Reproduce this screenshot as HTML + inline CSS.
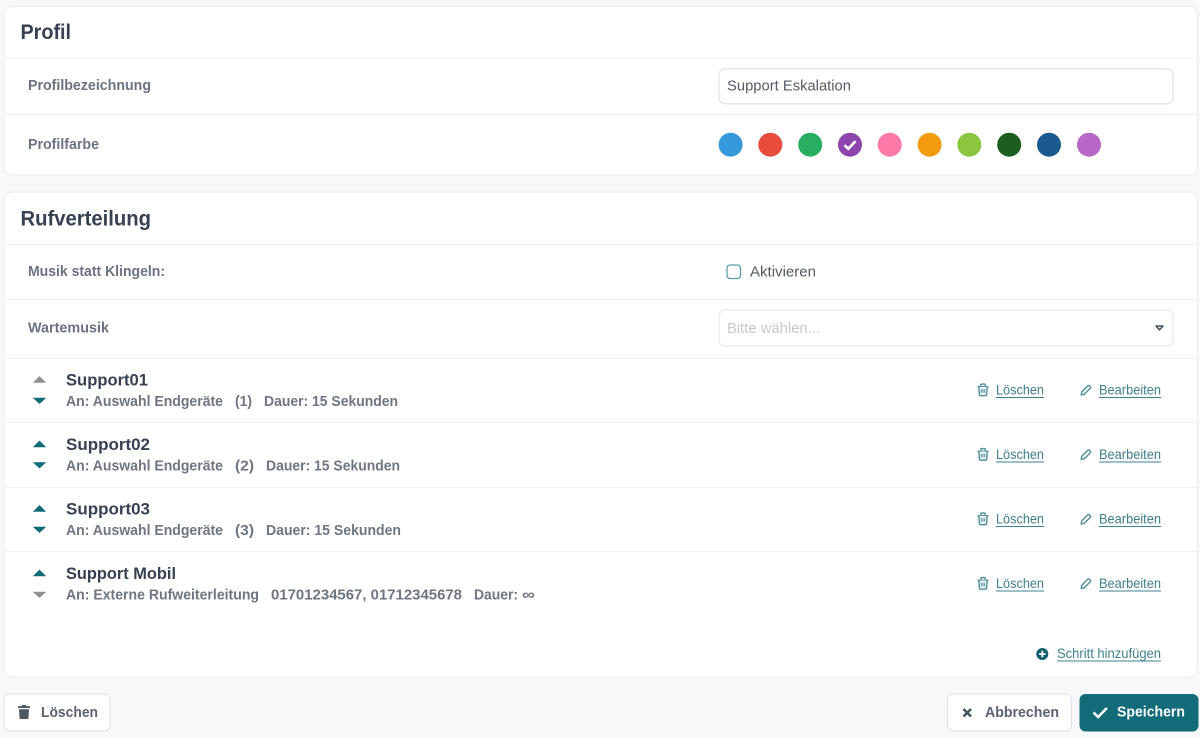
<!DOCTYPE html>
<html lang="de">
<head>
<meta charset="utf-8">
<title>Profil</title>
<style>
html,body{margin:0;padding:0;width:1200px;height:737px;overflow:hidden;background:#f7f8fa}
svg{display:block;filter:blur(.3px)}
text{font-family:"Liberation Sans",sans-serif}
.t{font-weight:700;font-size:21px;fill:#374151}
.l{font-weight:700;font-size:15px;fill:#6b7280}
.n{font-weight:700;font-size:16.5px;fill:#374151}
.s{font-weight:700;font-size:15px;fill:#6f7682}
.a{font-size:14px;fill:#3f7f8b}
.i{font-size:15px;fill:#555b66}
.b{font-weight:700;font-size:15px;fill:#5b6370}
</style>
</head>
<body>
<svg width="1200" height="737" viewBox="0 0 1200 737" xmlns="http://www.w3.org/2000/svg">
<defs>
<g id="tr" fill="#eaf2f3" stroke="#4f8e9a" stroke-width="1.4">
<path d="M-5 -3.2h10M-2.2 -3.4v-1.6q0-.9.9-.9h2.6q.9 0 .9.9v1.6" stroke-linecap="round" fill="none"/>
<path d="M-4.2 -3l.6 7.6q.1 1.1 1.1 1.1h5q1 0 1.1-1.1l.6-7.6"/>
<path d="M-1.7 -.8v3.6M0 -.8v3.6M1.7 -.8v3.6" stroke-width=".9" fill="none"/>
</g>
<g id="pe" fill="#fff" stroke="#4f8e9a" stroke-width="1.4" stroke-linejoin="round">
<path d="M-4.8 5l.6-3.2 6-6q.8-.8 1.6 0l.9.9q.8.8 0 1.6l-6 6z"/>
</g>
</defs>

<rect width="1200" height="737" fill="#f7f8fa"/>

<!-- Card 1 -->
<rect x="4" y="6.5" width="1193.5" height="168.5" rx="8" fill="#fff" stroke="#eaecef"/>
<rect x="5" y="57.5" width="1192" height="1" fill="#eff0f2"/>
<rect x="5" y="114" width="1192" height="1" fill="#eff0f2"/>
<text class="t" x="20.5" y="39" textLength="50.5" lengthAdjust="spacingAndGlyphs">Profil</text>
<text class="l" x="28" y="90" textLength="123" lengthAdjust="spacingAndGlyphs">Profilbezeichnung</text>
<rect x="719" y="68.8" width="454" height="35" rx="6" fill="#fff" stroke="#e2e4e9" stroke-width="1.3"/>
<text class="i" x="727" y="90.5" textLength="124" lengthAdjust="spacingAndGlyphs">Support Eskalation</text>
<text class="l" x="28" y="149" textLength="71" lengthAdjust="spacingAndGlyphs">Profilfarbe</text>
<circle cx="730.6" cy="144.7" r="12" fill="#3498db"/>
<circle cx="770.3" cy="144.7" r="12" fill="#e74c3c"/>
<circle cx="810.2" cy="144.7" r="12" fill="#27ae60"/>
<circle cx="850" cy="144.7" r="12" fill="#8e44ad"/>
<path d="M844.5 145.2l3.8 3.6 7.2-7.6" fill="none" stroke="#fff" stroke-width="2.6"/>
<circle cx="889.7" cy="144.7" r="12" fill="#fd79a8"/>
<circle cx="929.6" cy="144.7" r="12" fill="#f39c12"/>
<circle cx="969.3" cy="144.7" r="12" fill="#8cc63f"/>
<circle cx="1009.2" cy="144.7" r="12" fill="#1b5e20"/>
<circle cx="1049" cy="144.7" r="12" fill="#1a5a8f"/>
<circle cx="1089" cy="144.7" r="12" fill="#b768c7"/>

<!-- Card 2 -->
<rect x="4" y="192" width="1193.5" height="485" rx="8" fill="#fff" stroke="#eaecef"/>
<rect x="5" y="244" width="1192" height="1" fill="#eff0f2"/>
<rect x="5" y="299" width="1192" height="1" fill="#eff0f2"/>
<rect x="5" y="358" width="1192" height="1" fill="#eff0f2"/>
<rect x="5" y="422" width="1192" height="1" fill="#eff0f2"/>
<rect x="5" y="487" width="1192" height="1" fill="#eff0f2"/>
<rect x="5" y="551" width="1192" height="1" fill="#eff0f2"/>
<text class="t" x="20.5" y="225.5" textLength="130.5" lengthAdjust="spacingAndGlyphs">Rufverteilung</text>
<text class="l" x="28" y="276" textLength="137" lengthAdjust="spacingAndGlyphs">Musik statt Klingeln:</text>
<rect x="727" y="265" width="13.5" height="13.5" rx="3" fill="#fff" stroke="#5a9eaa" stroke-width="1.3"/>
<text class="i" x="750" y="276.5" textLength="66" lengthAdjust="spacingAndGlyphs">Aktivieren</text>
<text class="l" x="28" y="332.5" textLength="81" lengthAdjust="spacingAndGlyphs">Wartemusik</text>
<rect x="719" y="310" width="454" height="36" rx="6" fill="#fff" stroke="#e8eaed" stroke-width="1.3"/>
<text x="727" y="333" font-size="15" fill="#c4c8cf" textLength="93" lengthAdjust="spacingAndGlyphs">Bitte wählen...</text>
<path d="M1156 326h7l-3.5 3.8z" fill="#fff" stroke="#4b5563" stroke-width="1.6" stroke-linejoin="round"/>

<!-- Row 1 -->
<path d="M33.5 382.5l6-6 6 6z" fill="#8f8f8f" stroke="#8f8f8f" stroke-width=".6" stroke-linejoin="round"/>
<path d="M33.5 398l6 5.5 6-5.5z" fill="#126b78" stroke="#126b78" stroke-width=".6" stroke-linejoin="round"/>
<text class="n" x="66" y="385.5" textLength="82" lengthAdjust="spacingAndGlyphs">Support01</text>
<text class="s" x="66" y="406" textLength="157" lengthAdjust="spacingAndGlyphs">An: Auswahl Endgeräte</text>
<text class="s" x="235" y="406" textLength="17" lengthAdjust="spacingAndGlyphs">(1)</text>
<text class="s" x="264" y="406" textLength="134" lengthAdjust="spacingAndGlyphs">Dauer: 15 Sekunden</text>
<use href="#tr" x="983" y="390"/>
<text class="a" x="996" y="394.5" textLength="48" lengthAdjust="spacingAndGlyphs">Löschen</text>
<rect x="996" y="397" width="48" height="1" fill="#3f8290"/>
<use href="#pe" x="1086" y="390"/>
<text class="a" x="1099" y="394.5" textLength="62" lengthAdjust="spacingAndGlyphs">Bearbeiten</text>
<rect x="1099" y="397" width="62" height="1" fill="#3f8290"/>

<!-- Row 2 -->
<path d="M33.5 447l6-6 6 6z" fill="#126b78" stroke="#126b78" stroke-width=".6" stroke-linejoin="round"/>
<path d="M33.5 462.5l6 5.5 6-5.5z" fill="#126b78" stroke="#126b78" stroke-width=".6" stroke-linejoin="round"/>
<text class="n" x="66" y="450" textLength="84" lengthAdjust="spacingAndGlyphs">Support02</text>
<text class="s" x="66" y="470.5" textLength="157" lengthAdjust="spacingAndGlyphs">An: Auswahl Endgeräte</text>
<text class="s" x="235" y="470.5" textLength="19" lengthAdjust="spacingAndGlyphs">(2)</text>
<text class="s" x="266" y="470.5" textLength="134" lengthAdjust="spacingAndGlyphs">Dauer: 15 Sekunden</text>
<use href="#tr" x="983" y="454.5"/>
<text class="a" x="996" y="459" textLength="48" lengthAdjust="spacingAndGlyphs">Löschen</text>
<rect x="996" y="461.5" width="48" height="1" fill="#3f8290"/>
<use href="#pe" x="1086" y="454.5"/>
<text class="a" x="1099" y="459" textLength="62" lengthAdjust="spacingAndGlyphs">Bearbeiten</text>
<rect x="1099" y="461.5" width="62" height="1" fill="#3f8290"/>

<!-- Row 3 -->
<path d="M33.5 511.5l6-6 6 6z" fill="#126b78" stroke="#126b78" stroke-width=".6" stroke-linejoin="round"/>
<path d="M33.5 527l6 5.5 6-5.5z" fill="#126b78" stroke="#126b78" stroke-width=".6" stroke-linejoin="round"/>
<text class="n" x="66" y="514.5" textLength="84" lengthAdjust="spacingAndGlyphs">Support03</text>
<text class="s" x="66" y="535" textLength="157" lengthAdjust="spacingAndGlyphs">An: Auswahl Endgeräte</text>
<text class="s" x="235" y="535" textLength="19" lengthAdjust="spacingAndGlyphs">(3)</text>
<text class="s" x="266" y="535" textLength="135" lengthAdjust="spacingAndGlyphs">Dauer: 15 Sekunden</text>
<use href="#tr" x="983" y="519"/>
<text class="a" x="996" y="523.5" textLength="48" lengthAdjust="spacingAndGlyphs">Löschen</text>
<rect x="996" y="526" width="48" height="1" fill="#3f8290"/>
<use href="#pe" x="1086" y="519"/>
<text class="a" x="1099" y="523.5" textLength="62" lengthAdjust="spacingAndGlyphs">Bearbeiten</text>
<rect x="1099" y="526" width="62" height="1" fill="#3f8290"/>

<!-- Row 4 -->
<path d="M33.5 576l6-6 6 6z" fill="#126b78" stroke="#126b78" stroke-width=".6" stroke-linejoin="round"/>
<path d="M33.5 592l6 5.5 6-5.5z" fill="#8f8f8f" stroke="#8f8f8f" stroke-width=".6" stroke-linejoin="round"/>
<text class="n" x="66" y="579" textLength="110" lengthAdjust="spacingAndGlyphs">Support Mobil</text>
<text class="s" x="66" y="599.5" textLength="193" lengthAdjust="spacingAndGlyphs">An: Externe Rufweiterleitung</text>
<text class="s" x="271" y="599.5" textLength="191" lengthAdjust="spacingAndGlyphs">01701234567, 01712345678</text>
<text class="s" x="474" y="599.5" textLength="44" lengthAdjust="spacingAndGlyphs">Dauer:</text>
<text class="s" x="522" y="599.5" textLength="13" lengthAdjust="spacingAndGlyphs">∞</text>
<use href="#tr" x="983" y="583.5"/>
<text class="a" x="996" y="588" textLength="48" lengthAdjust="spacingAndGlyphs">Löschen</text>
<rect x="996" y="590.5" width="48" height="1" fill="#3f8290"/>
<use href="#pe" x="1086" y="583.5"/>
<text class="a" x="1099" y="588" textLength="62" lengthAdjust="spacingAndGlyphs">Bearbeiten</text>
<rect x="1099" y="590.5" width="62" height="1" fill="#3f8290"/>

<!-- Add step -->
<circle cx="1042.3" cy="654" r="6" fill="#0f5f6c"/>
<path d="M1039 654h6.6M1042.3 650.7v6.6" stroke="#fff" stroke-width="1.8"/>
<text class="a" x="1057" y="658" textLength="104" lengthAdjust="spacingAndGlyphs">Schritt hinzufügen</text>
<rect x="1057" y="660.5" width="104" height="1" fill="#3f8290"/>

<!-- Buttons -->
<rect x="4" y="694" width="106" height="37" rx="6" fill="#fff" stroke="#e2e4e9" stroke-width="1.2"/>
<path d="M18 708h12v-1.8h-3.4l-.7-1.2h-3.8l-.7 1.2H18zM19 709.2h10l-.6 9q-.1.8-.9.8h-7q-.8 0-.9-.8z" fill="#4b5563"/>
<text class="b" x="41" y="717" textLength="57" lengthAdjust="spacingAndGlyphs">Löschen</text>

<rect x="947.5" y="694" width="124" height="37" rx="6" fill="#fff" stroke="#e2e4e9" stroke-width="1.2"/>
<path d="M963.5 709l7.5 7.5M971 709l-7.5 7.5" stroke="#4b5563" stroke-width="2.6"/>
<text class="b" x="985" y="717" textLength="74" lengthAdjust="spacingAndGlyphs">Abbrechen</text>

<rect x="1079.5" y="694" width="119" height="37.5" rx="6" fill="#126b78"/>
<path d="M1093.5 712.5l4.6 4.5 8.8-9" fill="none" stroke="#fff" stroke-width="2.6"/>
<text x="1117" y="716.5" font-size="15" font-weight="700" fill="#fff" textLength="68" lengthAdjust="spacingAndGlyphs">Speichern</text>
</svg>
</body>
</html>
